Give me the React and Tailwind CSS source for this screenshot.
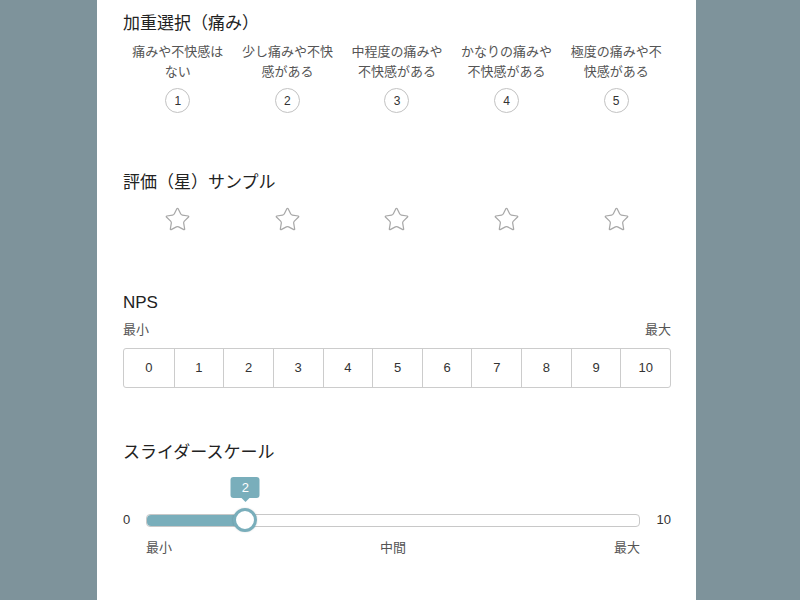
import React, { useState } from 'react';
import { Star } from 'lucide-react';

const painLabels = [
  '痛みや不快感はない',
  '少し痛みや不快感がある',
  '中程度の痛みや不快感がある',
  'かなりの痛みや不快感がある',
  '極度の痛みや不快感がある',
];

const font = { fontFamily: '"Liberation Sans", "Noto Sans CJK JP", sans-serif' };

export default function App() {
  const [pain, setPain] = useState(null);
  const [stars, setStars] = useState(0);
  const [nps, setNps] = useState(null);
  const [slider] = useState(2);
  const pct = (slider / 10) * 100;

  return (
    <div className="min-h-[600px] bg-[#7e939b] flex" style={font}>
      <div className="ml-[97px] w-[599px] bg-white pl-[26px] pr-[25px] pt-[12px] pb-[40px] text-[#222]">
        {/* 加重選択 */}
        <h2 className="text-[17px] leading-[24px]">加重選択（痛み）</h2>
        <div className="grid grid-cols-5 mt-[6px]">
          {painLabels.map((label, i) => (
            <div key={i} className="flex flex-col items-center px-[4px]">
              <div className="h-[40px] text-[13px] leading-[20px] text-[#555] text-center">{label}</div>
              <button
                type="button"
                onClick={() => setPain(i + 1)}
                className={`mt-[6px] w-[25px] h-[25px] rounded-full border border-[#c2c2c2] text-[12px] leading-none flex items-center justify-center ${pain === i + 1 ? 'bg-[#79aebb] text-white' : 'text-[#333]'}`}
              >
                {i + 1}
              </button>
            </div>
          ))}
        </div>

        {/* 評価 */}
        <h2 className="mt-[58px] text-[17px] leading-[24px]">評価（星）サンプル</h2>
        <div className="grid grid-cols-5 mt-[11px]">
          {[1, 2, 3, 4, 5].map((n) => (
            <div key={n} className="flex justify-center">
              <button type="button" onClick={() => setStars(n)} className="h-[27px]">
                <Star size={27} strokeWidth={1.1} className={n <= stars ? 'text-[#e0b030] fill-[#e0b030]' : 'text-[#a8a8a8]'} />
              </button>
            </div>
          ))}
        </div>

        {/* NPS */}
        <h2 className="mt-[58px] text-[17px] leading-[24px]">NPS</h2>
        <div className="mt-[6px] flex justify-between text-[13px] leading-[18px] text-[#555]">
          <span>最小</span>
          <span>最大</span>
        </div>
        <div className="mt-[9px] grid grid-cols-11 border border-[#ccc] rounded-[3px] h-[40px]">
          {Array.from({ length: 11 }, (_, i) => (
            <button
              key={i}
              type="button"
              onClick={() => setNps(i)}
              className={`text-[13px] text-[#333] flex items-center justify-center ${i > 0 ? 'border-l border-[#ccc]' : ''} ${nps === i ? 'bg-[#79aebb] text-white' : ''}`}
            >
              {i}
            </button>
          ))}
        </div>

        {/* スライダー */}
        <h2 className="mt-[53px] text-[17px] leading-[24px]">スライダースケール</h2>
        <div className="mt-[43px] flex items-center h-[24px]">
          <span className="w-[23px] text-[13px] text-[#333] text-left">0</span>
          <div className="relative flex-1 h-[13px] rounded-[4px] border border-[#c8c8c8] bg-white">
            <div className="h-full rounded-l-[4px] bg-[#79aebb]" style={{ width: `${pct}%` }} />
            <div className="absolute top-1/2" style={{ left: `${pct}%` }}>
              <div className="absolute -translate-x-1/2 -translate-y-1/2 w-[24px] h-[24px] rounded-full bg-white border-[3px] border-[#79aebb] shadow-[0_0_2px_rgba(0,0,0,0.15)]" />
              <div className="absolute -translate-x-1/2 bottom-[18px] flex flex-col items-center">
                <div className="w-[29px] h-[21px] rounded-[3px] bg-[#79aebb] text-white text-[13px] flex items-center justify-center">{slider}</div>
                <div className="w-0 h-0 border-l-[4px] border-r-[4px] border-t-[4px] border-l-transparent border-r-transparent border-t-[#79aebb]" />
              </div>
            </div>
          </div>
          <span className="w-[31px] text-[13px] text-[#333] text-right">10</span>
        </div>
        <div className="mt-[7px] ml-[23px] mr-[31px] flex justify-between text-[13px] leading-[18px] text-[#555]">
          <span>最小</span>
          <span>中間</span>
          <span>最大</span>
        </div>
      </div>
    </div>
  );
}
